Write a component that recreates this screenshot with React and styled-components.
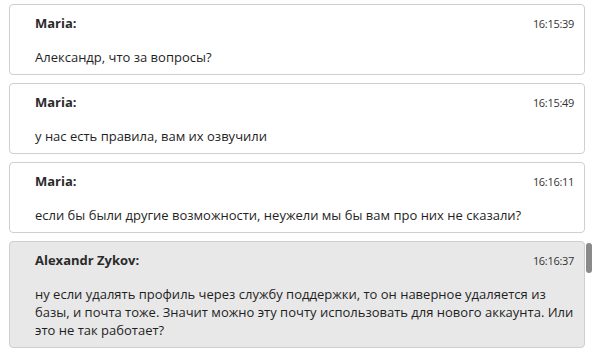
import React from 'react';
import styled, { createGlobalStyle } from 'styled-components';

const GlobalStyle = createGlobalStyle`
    html, body {
        margin: 0;
        padding: 0;
        background: #fff;
        overflow: hidden;
    }
    body {
        font-family: "Open Sans", "Noto Sans", sans-serif;
        color: #222;
    }
`;

const Container = styled.div`
    position: relative;
    width: 600px;
    height: 353px;
    padding: 4px 15px 0 9px;
    box-sizing: border-box;
    display: flex;
    flex-direction: column;
    gap: 8px;
`;

const Card = styled.div`
    border: 1px solid #cfcfcf;
    border-radius: 4px;
    background: ${props => (props.own ? '#e8e8e8' : '#fff')};
    padding: 9px 10px 8px 25px;
    display: flex;
    flex-direction: column;
    gap: 16px;
`;

const Header = styled.div`
    display: flex;
    justify-content: space-between;
    align-items: center;
    height: 18px;
`;

const Name = styled.span`
    font-size: 13px;
    font-weight: 700;
    color: #2b2b2b;
`;

const Time = styled.span`
    font-size: 11px;
    color: #333;
    letter-spacing: -0.3px;
`;

const Text = styled.div`
    font-size: 13px;
    line-height: 18px;
    color: #1f1f1f;
`;

const Thumb = styled.div`
    position: absolute;
    left: 586px;
    top: 243px;
    width: 6px;
    height: 30px;
    border-radius: 3px;
    background: #8a8a8a;
`;

const messages = [
    { name: 'Maria:', time: '16:15:39', text: 'Александр, что за вопросы?' },
    { name: 'Maria:', time: '16:15:49', text: 'у нас есть правила, вам их озвучили' },
    { name: 'Maria:', time: '16:16:11', text: 'если бы были другие возможности, неужели мы бы вам про них не сказали?' },
    {
        name: 'Alexandr Zykov:',
        time: '16:16:37',
        own: true,
        text: 'ну если удалять профиль через службу поддержки, то он наверное удаляется из базы, и почта тоже. Значит можно эту почту использовать для нового аккаунта. Или это не так работает?',
    },
];

const App = () => {
    return (
        <>
            <GlobalStyle />
            <Container>
                {messages.map((m, i) => (
                    <Card key={i} own={m.own}>
                        <Header>
                            <Name>{m.name}</Name>
                            <Time>{m.time}</Time>
                        </Header>
                        <Text>{m.text}</Text>
                    </Card>
                ))}
                <Thumb />
            </Container>
        </>
    );
};

export default App;
